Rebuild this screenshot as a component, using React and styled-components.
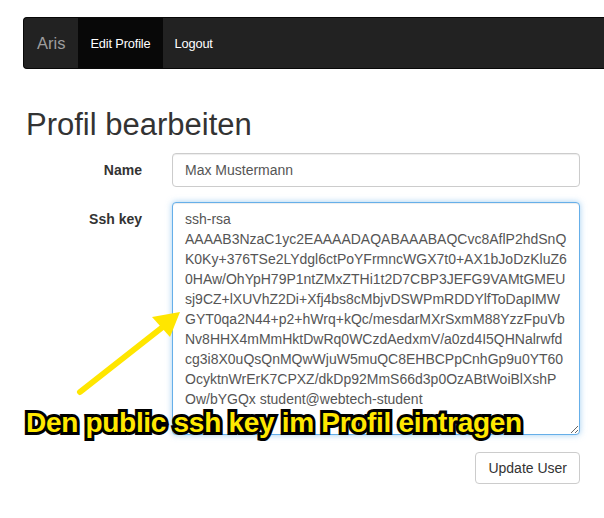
import React from "react";
import styled, { createGlobalStyle } from "styled-components";

const GlobalStyle = createGlobalStyle`
  html, body {
    margin: 0;
    padding: 0;
    background: #fff;
    overflow: hidden;
  }
  body {
    font-family: "Liberation Sans", Helvetica, Arial, sans-serif;
    font-size: 14px;
    color: #333;
  }
`;

const sshKey = [
  "ssh-rsa",
  "AAAAB3NzaC1yc2EAAAADAQABAAABAQCvc8AflP2hdSnQ",
  "K0Ky+376TSe2LYdgl6ctPoYFrmncWGX7t0+AX1bJoDzKluZ6",
  "0HAw/OhYpH79P1ntZMxZTHi1t2D7CBP3JEFG9VAMtGMEU",
  "sj9CZ+lXUVhZ2Di+Xfj4bs8cMbjvDSWPmRDDYlfToDapIMW",
  "GYT0qa2N44+p2+hWrq+kQc/mesdarMXrSxmM88YzzFpuVb",
  "Nv8HHX4mMmHktDwRq0WCzdAedxmV/a0zd4I5QHNalrwfd",
  "cg3i8X0uQsQnMQwWjuW5muQC8EHBCPpCnhGp9u0YT60",
  "OcyktnWrErK7CPXZ/dkDp92MmS66d3p0OzABtWoiBlXshP",
  "Ow/bYGQx student@webtech-student",
].join("\n");

const Page = styled.div`
  position: relative;
  padding: 17px 0 0 23px;
  height: 501px;
`;

const Navbar = styled.nav`
  display: flex;
  align-items: stretch;
  height: 50px;
  background: #222;
  border: 1px solid #080808;
  border-right: none;
  border-radius: 4px 0 0 4px;
`;

const Brand = styled.a`
  display: flex;
  align-items: center;
  padding: 0 13px;
  font-size: 16.5px;
  color: #9d9d9d;
  text-decoration: none;
`;

const NavLink = styled.a`
  display: flex;
  align-items: center;
  padding: 0 12px;
  font-size: 12.8px;
  letter-spacing: -0.15px;
  color: #fff;
  text-decoration: none;
  background: ${(p) => (p.$active ? "#080808" : "transparent")};
`;

const Title = styled.h1`
  margin: 39px 0 11px 3px;
  font-size: 31px;
  font-weight: 500;
  line-height: 34px;
  color: #333;
`;

const Form = styled.form`
  display: grid;
  grid-template-columns: 119px 408px;
  column-gap: 30px;
  row-gap: 15px;
`;

const Label = styled.label`
  padding-top: 7px;
  line-height: 20px;
  font-weight: bold;
  text-align: right;
  color: #333;
`;

const Input = styled.input`
  box-sizing: border-box;
  width: 100%;
  height: 34px;
  padding: 6px 12px;
  border: 1px solid #ccc;
  border-radius: 4px;
  font: inherit;
  color: #555;
  box-shadow: inset 0 1px 1px rgba(0, 0, 0, 0.075);
  outline: none;
`;

const TextArea = styled.textarea`
  box-sizing: border-box;
  width: 100%;
  height: 233px;
  padding: 6px 12px;
  border: 1px solid #66afe9;
  border-radius: 4px;
  font: inherit;
  line-height: 20px;
  color: #555;
  overflow: hidden;
  outline: none;
  box-shadow: inset 0 1px 1px rgba(0, 0, 0, 0.075),
    0 0 6px rgba(102, 175, 233, 0.6);
`;

const Actions = styled.div`
  grid-column: 2;
  display: flex;
  justify-content: flex-end;
  padding-top: 2px;
`;

const Button = styled.button`
  height: 32px;
  padding: 0 12px;
  background: #fff;
  border: 1px solid #ccc;
  border-radius: 4px;
  font: inherit;
  color: #333;
`;

const Arrow = styled.svg`
  position: absolute;
  left: 0;
  top: 0;
  pointer-events: none;
`;

const Caption = styled.div`
  position: absolute;
  left: 26px;
  top: 409px;
  font-size: 28px;
  line-height: 28px;
  font-weight: bold;
  letter-spacing: -0.3px;
  white-space: nowrap;
  color: #ffe800;
  -webkit-text-stroke: 6px #000;
  paint-order: stroke fill;
  text-shadow: 1px 1px 2px rgba(0, 0, 0, 0.35);
`;

export default function App() {
  return (
    <>
      <GlobalStyle />
      <Page>
        <Navbar>
          <Brand>Aris</Brand>
          <NavLink $active>Edit Profile</NavLink>
          <NavLink>Logout</NavLink>
        </Navbar>
        <Title>Profil bearbeiten</Title>
        <Form onSubmit={(e) => e.preventDefault()}>
          <Label>Name</Label>
          <Input defaultValue="Max Mustermann" />
          <Label>Ssh key</Label>
          <TextArea wrap="off" defaultValue={sshKey} />
          <Actions>
            <Button type="submit">Update User</Button>
          </Actions>
        </Form>
        <Arrow width="200" height="400" viewBox="0 0 200 400">
          <line
            x1="80"
            y1="392"
            x2="164"
            y2="326"
            stroke="#ffe600"
            strokeWidth="6"
            strokeLinecap="round"
          />
          <polygon points="180,312 152,317 170,337" fill="#ffe600" />
        </Arrow>
        <Caption>Den public ssh key im Profil eintragen</Caption>
      </Page>
    </>
  );
}
